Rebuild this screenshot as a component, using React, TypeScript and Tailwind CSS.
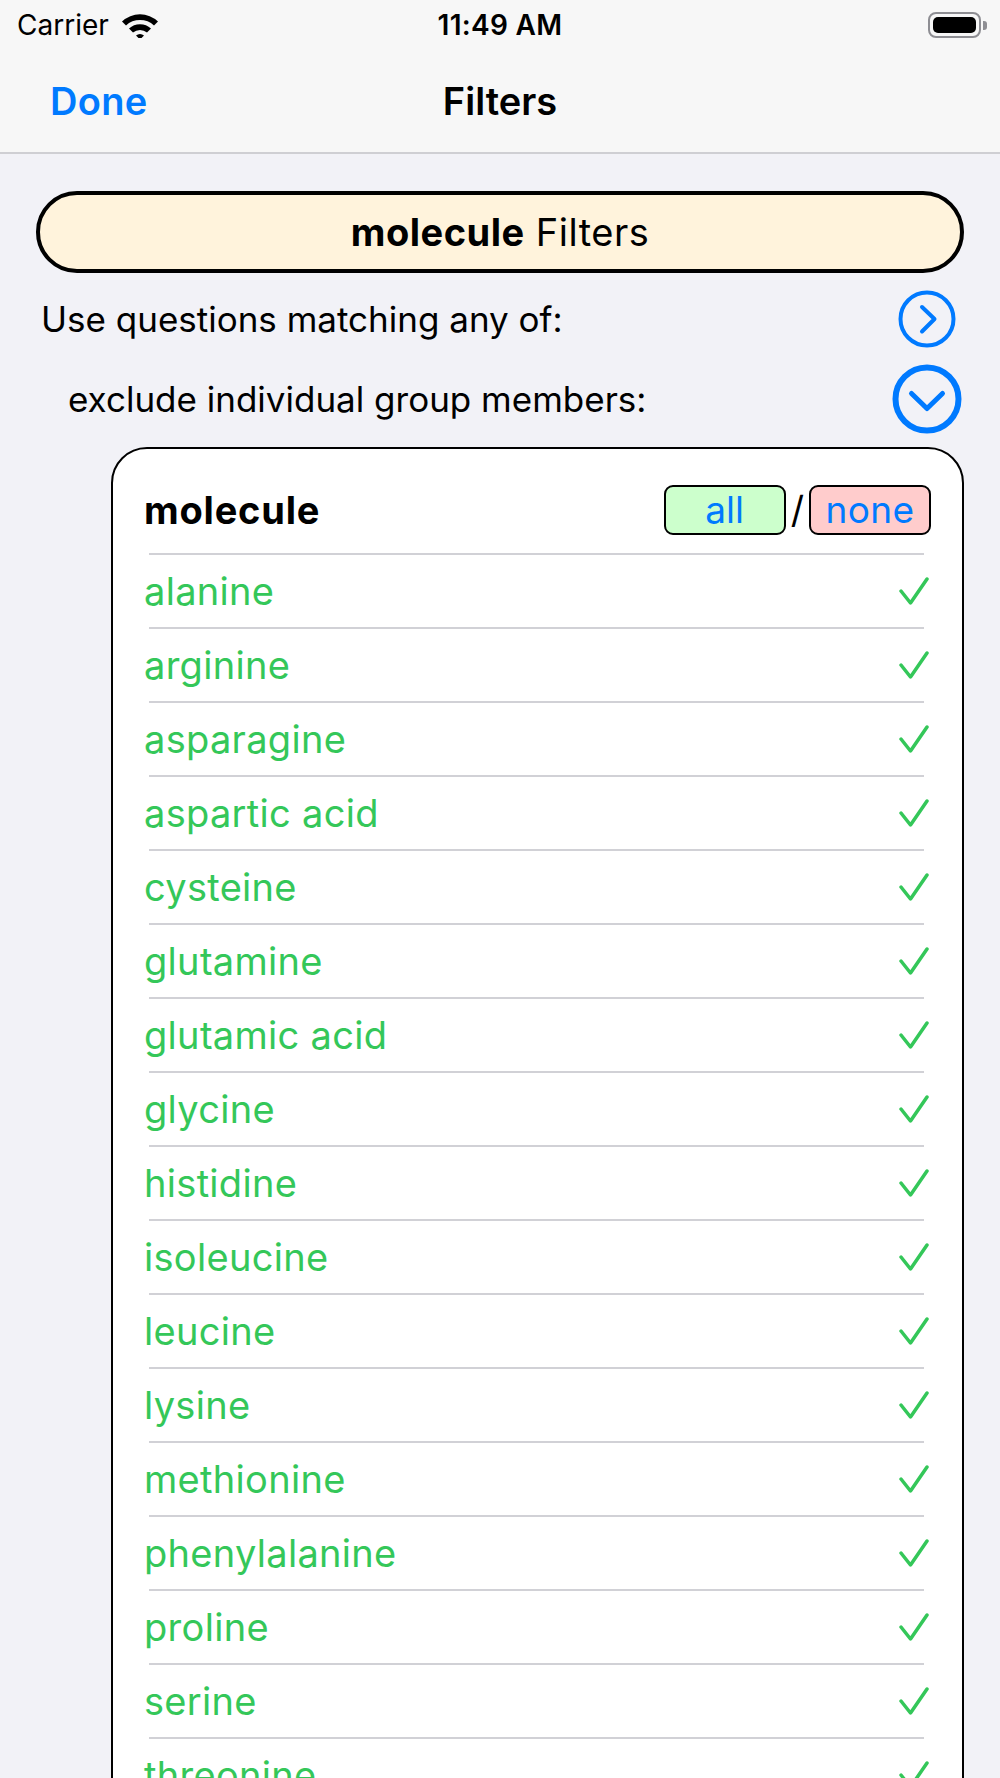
import React from "react";

const members = [
  "alanine",
  "arginine",
  "asparagine",
  "aspartic acid",
  "cysteine",
  "glutamine",
  "glutamic acid",
  "glycine",
  "histidine",
  "isoleucine",
  "leucine",
  "lysine",
  "methionine",
  "phenylalanine",
  "proline",
  "serine",
  "threonine",
  "tryptophan",
  "tyrosine",
  "valine",
];

function Wifi() {
  return (
    <svg width="38" height="26" viewBox="0 0 38 26" className="ml-[12px]">
      <path d="M1 9.5 A26 26 0 0 1 37 9.5 L33 13.6 A20 20 0 0 0 5 13.6 Z" fill="#000" />
      <path d="M8 16.6 A16 16 0 0 1 30 16.6 L26 20.6 A10.5 10.5 0 0 0 12 20.6 Z" fill="#000" />
      <path d="M15 23.6 A6 6 0 0 1 23 23.6 L19 27.5 Z" fill="#000" />
    </svg>
  );
}

function Battery() {
  return (
    <div className="flex items-center">
      <div className="flex h-[26px] w-[53px] items-center rounded-[8px] border-[2px] border-[#8e8e93] p-[3px]">
        <div className="h-full w-full rounded-[5px] bg-black" />
      </div>
      <div className="ml-[2px] h-[9px] w-[4px] rounded-r-[3px] bg-[#8e8e93]" />
    </div>
  );
}

function CircleChevronRight() {
  return (
    <svg width="58" height="58" viewBox="0 0 58 58">
      <circle cx="29" cy="29" r="26.5" fill="none" stroke="#007aff" strokeWidth="4" />
      <path d="M24 17 L36.5 29 L24 41.5" fill="none" stroke="#007aff" strokeWidth="4" strokeLinecap="round" strokeLinejoin="round" />
    </svg>
  );
}

function CircleChevronDown() {
  return (
    <svg width="70" height="70" viewBox="0 0 70 70">
      <circle cx="35" cy="35" r="31.5" fill="none" stroke="#007aff" strokeWidth="6" />
      <path d="M19.5 29.5 L35 44.5 L50.5 29.5" fill="none" stroke="#007aff" strokeWidth="5" strokeLinecap="round" strokeLinejoin="round" />
    </svg>
  );
}

function Check() {
  return (
    <svg width="30" height="29" viewBox="0 0 30 29" className="mr-[2px]">
      <path d="M2 14 L11.5 26 L28 2" fill="none" stroke="#34c759" strokeWidth="3.5" strokeLinecap="round" strokeLinejoin="round" />
    </svg>
  );
}

export default function App() {
  return (
    <div className="min-h-[1778px] w-full bg-[#f2f2f7] font-['Inter',sans-serif] text-black">
      <div className="border-b-[2px] border-[#cfcfd3] bg-[#f7f7f7]">
        <div className="relative flex h-[50px] items-center justify-between pl-[17px] pr-[13px]">
          <div className="flex items-center">
            <span className="text-[28px] leading-none">Carrier</span>
            <Wifi />
          </div>
          <span className="absolute left-1/2 -translate-x-1/2 text-[28px] font-semibold leading-none tracking-[0.3px]">
            11:49 AM
          </span>
          <Battery />
        </div>
        <div className="grid h-[102px] grid-cols-3 items-center px-[50px]">
          <span className="text-[38px] font-semibold tracking-[0.3px] text-[#007aff]">Done</span>
          <span className="text-center text-[38px] font-semibold">Filters</span>
          <span />
        </div>
      </div>

      <div className="px-[36px] pt-[37px]">
        <div className="flex h-[82px] items-center justify-center rounded-full border-[4px] border-black bg-[#fff3dc] text-[38px] tracking-[0.5px]">
          <span>
            <span className="font-bold">molecule</span> Filters
          </span>
        </div>

        <div className="mt-[17px] flex h-[58px] items-center justify-between pl-[5px] pr-[8px]">
          <span className="text-[35px]">Use questions matching any of:</span>
          <CircleChevronRight />
        </div>

        <div className="mt-[16px] flex h-[70px] items-center justify-between pl-[32px] pr-[2px]">
          <span className="text-[35px]">exclude individual group members:</span>
          <CircleChevronDown />
        </div>

        <div className="ml-[75px] mt-[13px] rounded-[36px] border-[2px] border-black bg-white px-[31px] pt-[36px]">
          <div className="flex h-[50px] items-center justify-between">
            <span className="text-[38px] font-bold tracking-[0.8px]">molecule</span>
            <div className="flex items-center">
              <button className="flex h-[50px] w-[122px] items-center justify-center rounded-[9px] border-[2px] border-black bg-[#ccffcc] text-[37px] text-[#007aff]">
                all
              </button>
              <span className="mx-[5px] text-[37px]">/</span>
              <button className="flex h-[50px] w-[122px] items-center justify-center rounded-[9px] border-[2px] border-black bg-[#ffcccc] text-[37px] tracking-[0.4px] text-[#007aff]">
                none
              </button>
            </div>
          </div>
          <div className="mt-[18px]">
            {members.map((name) => (
              <div key={name}>
                <div className="ml-[5px] mr-[7px] h-[2px] bg-[#d1d1d6]" />
                <div className="flex h-[72px] items-center justify-between">
                  <span className="text-[38px] tracking-[0.3px] text-[#34c759]">{name}</span>
                  <Check />
                </div>
              </div>
            ))}
          </div>
        </div>
      </div>
    </div>
  );
}
